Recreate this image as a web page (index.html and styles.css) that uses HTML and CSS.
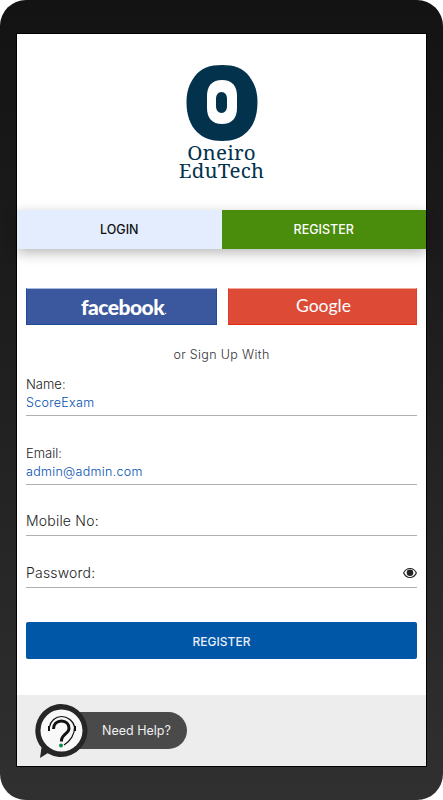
FILE: index.html
```html
<!DOCTYPE html>
<html lang="en">
<head>
<meta charset="utf-8">
<title>Oneiro EduTech</title>
<link rel="stylesheet" href="styles.css">
</head>
<body>
<div class="device">
  <div class="screen">
    <header class="brand">
      <svg class="brand-mark" width="72" height="76" viewBox="0 0 72 76">
        <path fill="#03324d" d="M36 0C48 0 57 3 63 11C69 19 71.500 27 71.500 37C71.500 50 68 60 61 67C55 73 47 76 36 76C25 76 17 73 11 67C4 60 .500 50 .500 37C.500 27 3 19 9 11C15 3 24 0 36 0Z"/>
        <path fill="#fff" d="M36 15C46 15 51 21 51 31V43C51 53 46 59 36 59C26 59 21 53 21 43V31C21 21 26 15 36 15Z"/>
        <path fill="#03324d" d="M35.500 27C39 27 41 30 41 34V41C41 45 39 48 35.500 48C32 48 30 45 30 41V34C30 30 32 27 35.500 27Z"/>
      </svg>
      <div class="brand-name">Oneiro<br>EduTech</div>
    </header>
    <nav class="tabs">
      <div class="tab tab-login">LOGIN</div>
      <div class="tab tab-register">REGISTER</div>
    </nav>
    <main class="form">
      <div class="social">
        <div class="social-btn fb">facebook<span class="fb-dot">.</span></div>
        <div class="social-btn gg">Google</div>
      </div>
      <p class="or">or Sign Up With</p>
      <div class="field field-filled field-name">
        <div class="label-small">Name:</div>
        <div class="value">ScoreExam</div>
      </div>
      <div class="field field-filled field-email">
        <div class="label-small">Email:</div>
        <div class="value">admin@admin.com</div>
      </div>
      <div class="field field-empty field-mobile">
        <span class="label-big">Mobile No:</span>
      </div>
      <div class="field field-empty field-pass">
        <span class="label-big">Password:</span>
        <svg class="eye" width="14" height="10" viewBox="0 0 14 10">
          <path fill="#222" d="M7 0C3.800 0 1.200 2 0 5c1.200 3 3.800 5 7 5s5.800-2 7-5C12.800 2 10.200 0 7 0Z"/>
          <path fill="#fff" d="M7 1.100C4.500 1.100 2.400 2.600 1.300 5c1.100 2.400 3.200 3.900 5.700 3.900s4.600-1.500 5.700-3.900C11.600 2.600 9.500 1.100 7 1.100Z"/>
          <circle cx="7" cy="4.700" r="3.300" fill="#222"/>
        </svg>
      </div>
      <div class="submit">REGISTER</div>
    </main>
    <footer class="foot">
      <div class="help">
        <div class="help-pill">Need Help?</div>
        <svg class="help-icon" width="56" height="60" viewBox="0 0 56 60">
          <path fill="#262626" d="M28 1a26.500 26.500 0 1 1-13.500 49.300L7 55l1.500-10.500A26.500 26.500 0 0 1 28 1Z"/>
          <circle cx="28.500" cy="27.500" r="21" fill="#f7f8f7"/>
          <path fill="none" stroke="#111" stroke-width="3" d="M20.500 26c0-5 3.500-8 8-8s7.500 3 7.500 7.500c0 5-7.500 6-7.500 12v1"/>
          <path fill="none" stroke="#111" stroke-width="1.200" d="M16.500 24c1-6 6-10.500 12-10.500S40.500 18 41.500 24c.5 7-4 14-10.500 18"/>
          <path fill="none" stroke="#111" stroke-width="2" d="M16 23v5M42 23v5"/>
          <circle cx="28" cy="42.500" r="2" fill="#0a8a50"/>
        </svg>
      </div>
    </footer>
  </div>
</div>
</body>
</html>
```
FILE: styles.css
```css
* { box-sizing: border-box; }
html, body { margin: 0; padding: 0; background: #fff; }
body { width: 443px; height: 800px; overflow: hidden; font-family: "Inter", "Liberation Sans", sans-serif; }

.device {
  width: 443px;
  height: 800px;
  padding: 33px 16px;
  border-radius: 26px;
  background: linear-gradient(180deg, #131313 0%, #1c1c1c 35%, #303030 100%);
}
.screen {
  height: 734px;
  border: 1px solid #000;
  background: #fff;
  display: flex;
  flex-direction: column;
}

.brand {
  height: 176px;
  padding-top: 31px;
  display: flex;
  flex-direction: column;
  align-items: center;
}
.brand-mark { display: block; }
.brand-name {
  margin-top: 2px;
  font-family: "Noto Serif", "DejaVu Serif", "Liberation Serif", serif;
  font-size: 20.500px;
  line-height: 18px;
  letter-spacing: 0.2px;
  text-align: center;
  color: #03324d;
}

.tabs {
  display: flex;
  height: 39px;
  box-shadow: 0 4px 12px rgba(0, 0, 0, 0.28);
  position: relative;
}
.tab {
  flex: 1;
  display: flex;
  align-items: center;
  justify-content: center;
  font-size: 12.500px;
  font-weight: 500;
}
.tab-login { background: #e3edfd; color: #111; }
.tab-register { background: #4a8c0c; color: #fff; }

.form { flex: 1; padding: 39px 9px 0; }
.social { display: flex; gap: 11px; }
.social-btn {
  flex: 1;
  height: 37px;
  display: flex;
  align-items: center;
  justify-content: center;
  color: #fff;
}
.fb {
  background: #3b589e;
  border: 1px solid #1f4a9a;
  border-top-color: #a9bbdd;
  padding-left: 4px;
  font-family: "Lato", sans-serif;
  font-size: 21px;
  font-weight: 900;
  letter-spacing: -0.5px;
}
.fb-dot { font-size: 10px; font-weight: 400; align-self: flex-end; margin-bottom: 8px; }
.gg {
  background: #dd4b37;
  border: 1px solid #e8392a;
  border-top-color: #f3a99c;
  border-bottom-color: #e32a12;
  padding-left: 2px;
  padding-bottom: 2px;
  font-family: "Lato", sans-serif;
  font-size: 17.500px;
}
.or {
  margin: 21px 0 0;
  text-align: center;
  font-size: 12.500px;
  font-weight: 300;
  line-height: 18px;
  letter-spacing: 0.35px;
  color: #333;
}

.field { border-bottom: 1px solid #b0b0b0; }
.field-filled { height: 40px; }
.field-name { margin-top: 12px; }
.field-email { margin-top: 29px; }
.field-empty {
  height: 33px;
  display: flex;
  align-items: center;
  justify-content: space-between;
  padding-top: 3px;
}
.field-mobile { margin-top: 18px; }
.field-pass { margin-top: 19px; }
.label-small { font-size: 13px; font-weight: 300; line-height: 16px; color: #222; }
.value { margin-top: 2px; font-size: 12.500px; font-weight: 300; line-height: 17px; color: #004fb0; letter-spacing: 0.3px; }
.label-big { font-size: 14px; font-weight: 300; color: #222; letter-spacing: 0.2px; }
.eye { display: block; }

.submit {
  margin-top: 34px;
  height: 37px;
  padding-top: 2px;
  border-radius: 2px;
  background: #0056a7;
  color: #e8effa;
  display: flex;
  align-items: center;
  justify-content: center;
  font-size: 12px;
  font-weight: 500;
}

.foot { height: 71px; background: #ededed; position: relative; }
.help { position: absolute; left: 16px; top: 8px; width: 155px; height: 60px; }
.help-pill {
  position: absolute;
  left: 28px;
  top: 9px;
  width: 126px;
  height: 37px;
  padding-left: 41px;
  border-radius: 19px;
  background: #4a4a4a;
  color: #f0f0f0;
  font-size: 12.500px;
  font-weight: 400;
  white-space: nowrap;
  display: flex;
  align-items: center;
}
.help-icon { position: absolute; left: 0; top: 0; }
```
